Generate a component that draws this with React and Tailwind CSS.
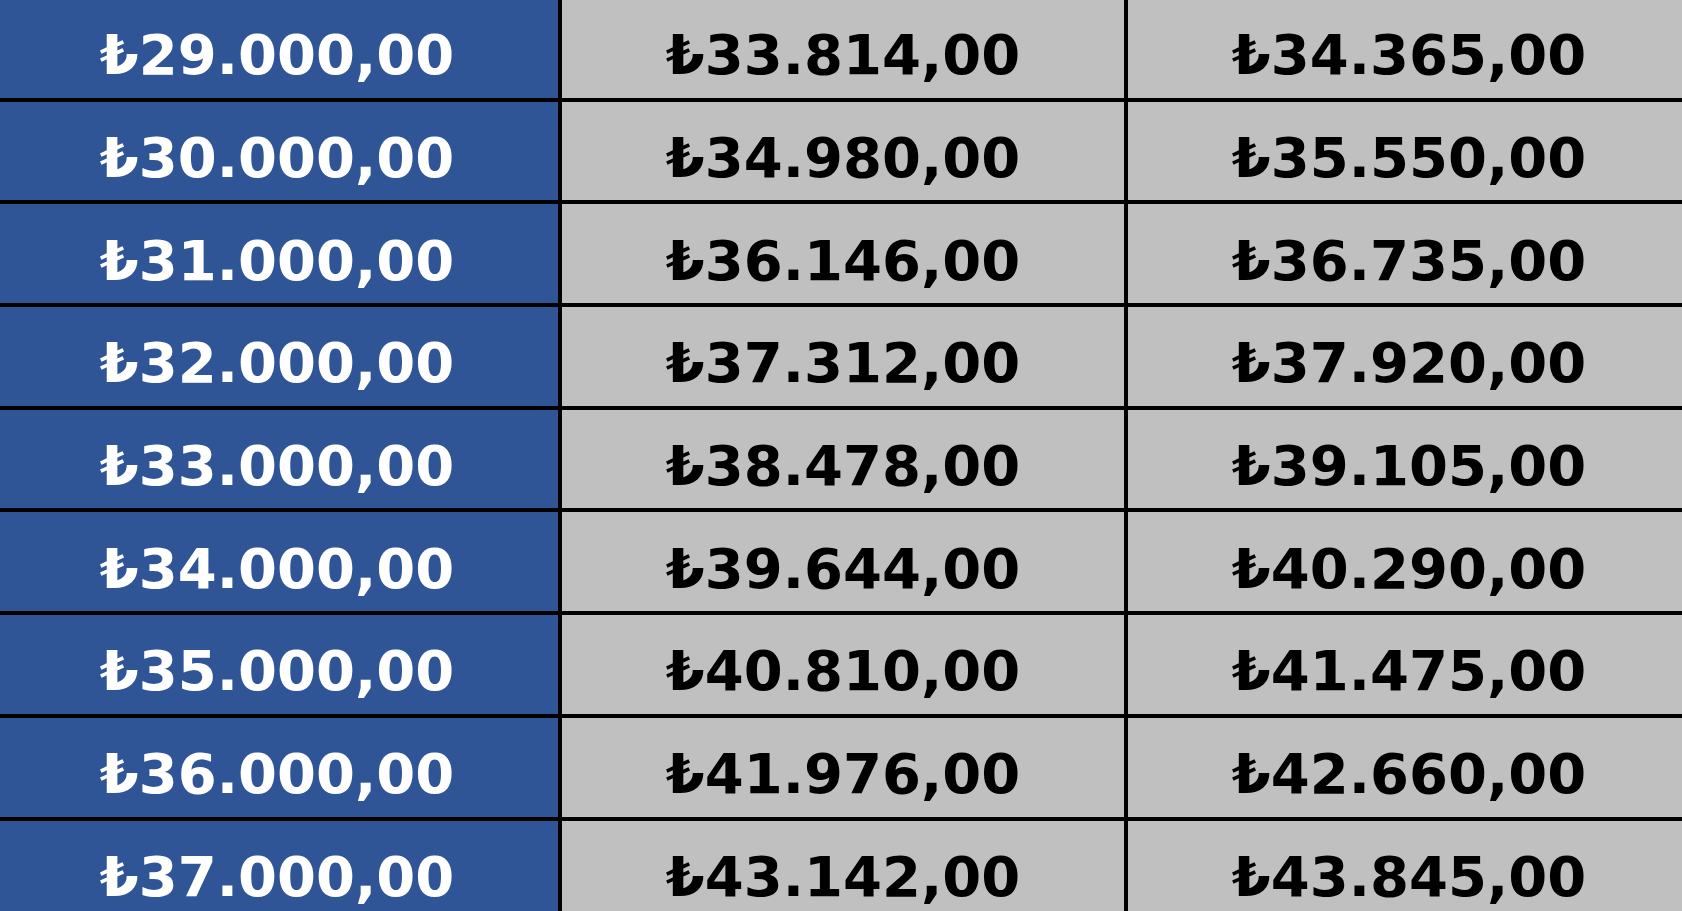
import React from 'react';

const rows = [
  ['₺29.000,00', '₺33.814,00', '₺34.365,00'],
  ['₺30.000,00', '₺34.980,00', '₺35.550,00'],
  ['₺31.000,00', '₺36.146,00', '₺36.735,00'],
  ['₺32.000,00', '₺37.312,00', '₺37.920,00'],
  ['₺33.000,00', '₺38.478,00', '₺39.105,00'],
  ['₺34.000,00', '₺39.644,00', '₺40.290,00'],
  ['₺35.000,00', '₺40.810,00', '₺41.475,00'],
  ['₺36.000,00', '₺41.976,00', '₺42.660,00'],
  ['₺37.000,00', '₺43.142,00', '₺43.845,00'],
];

export default function App() {
  return (
    <div className="w-[1682px] h-[911px] overflow-hidden bg-[#c0c0c0]">
      {/* price table, cropped at the edges like the original sheet */}
      <div
        className="grid grid-cols-[562px_562px_562px] auto-rows-[98.7px] gap-[4px] bg-black ml-[-4px] mt-[-1px] w-[1694px]"
        style={{ fontFamily: '"DejaVu Sans", "Noto Sans", sans-serif' }}
      >
        {rows.map((row, i) => (
          <React.Fragment key={i}>
            <div className="bg-[#2f5597] text-white font-bold text-[56px] flex items-center justify-center pt-[14px]">
              {row[0]}
            </div>
            <div className="bg-[#c0c0c0] text-black font-bold text-[56px] flex items-center justify-center pt-[14px]">
              {row[1]}
            </div>
            <div className="bg-[#c0c0c0] text-black font-bold text-[56px] flex items-center justify-center pt-[14px]">
              {row[2]}
            </div>
          </React.Fragment>
        ))}
      </div>
    </div>
  );
}
